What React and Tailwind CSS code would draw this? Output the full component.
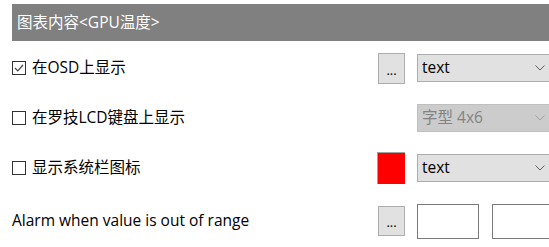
import React from "react";

const font = { fontFamily: '"Open Sans", "Noto Sans CJK SC", sans-serif' };

const Chevron = ({ color = "#606060" }) => (
  <svg width="10" height="6" viewBox="0 0 10 6" className="shrink-0">
    <path d="M0.5 0.5 L5 5 L9.5 0.5" fill="none" stroke={color} strokeWidth="1" />
  </svg>
);

const Check = ({ checked }) => (
  <span className="w-[14px] h-[14px] border border-[#333333] bg-white flex items-center justify-center shrink-0">
    {checked && (
      <svg width="12" height="12" viewBox="0 0 12 12">
        <path d="M2 6 L4.8 8.8 L10 3" fill="none" stroke="#444" strokeWidth="1.2" />
      </svg>
    )}
  </span>
);

const Select = ({ label, disabled }) => (
  <div
    className={
      "w-[138px] h-[28px] shrink-0 border flex items-center justify-between pl-[4px] pr-[9px] text-[15.5px] " +
      (disabled
        ? "bg-[#cccccc] border-[#bfbfbf] text-[#838383]"
        : "bg-[#e1e1e1] border-[#adadad] text-black")
    }
  >
    <span>{label}</span>
    <Chevron color={disabled ? "#a0a0a0" : "#606060"} />
  </div>
);

const DotsButton = ({ h = "h-[31px]" }) => (
  <div className={"w-[27px] shrink-0 border border-[#adadad] bg-[#e1e1e1] flex items-end justify-center pb-[6px] text-[13px] text-black leading-none " + h}>
    ...
  </div>
);

export default function App() {
  return (
    <div className="w-[549px] h-[247px] overflow-hidden bg-white pl-[12px] pt-[4px]" style={font}>
      <div className="h-[37px] bg-[#808080] text-white text-[15.5px] flex items-center pl-[5px]">
        图表内容&lt;GPU温度&gt;
      </div>

      <div className="mt-[2px] h-[50px] flex items-center">
        <label className="flex items-center gap-[6px] text-[15.5px] text-black w-[366px] shrink-0">
          <Check checked />
          在OSD上显示
        </label>
        <DotsButton />
        <div className="ml-[12px] shrink-0">
          <Select label="text" />
        </div>
      </div>

      <div className="h-[50px] flex items-center">
        <label className="flex items-center gap-[6px] text-[15.5px] text-black w-[366px] shrink-0">
          <Check />
          在罗技LCD键盘上显示
        </label>
        <div className="w-[27px] shrink-0" />
        <div className="ml-[12px] shrink-0">
          <Select label="字型 4x6" disabled />
        </div>
      </div>

      <div className="h-[50px] flex items-center">
        <label className="flex items-center gap-[6px] text-[15.5px] text-black w-[365px] shrink-0">
          <Check />
          显示系统栏图标
        </label>
        <div className="w-[28px] h-[32px] shrink-0 bg-[#ff0000] border-l border-t border-[#a0a0a0]" />
        <div className="ml-[12px] shrink-0">
          <Select label="text" />
        </div>
      </div>

      <div className="h-[50px] flex items-center pt-[6px]">
        <span className="text-[15.5px] text-black w-[366px] shrink-0">Alarm when value is out of range</span>
        <DotsButton h="h-[30px]" />
        <div className="ml-[12px] w-[62px] h-[35px] border border-[#7a7a7a] bg-white shrink-0" />
        <div className="ml-[13px] w-[62px] h-[35px] border border-[#7a7a7a] bg-white shrink-0" />
      </div>
    </div>
  );
}
